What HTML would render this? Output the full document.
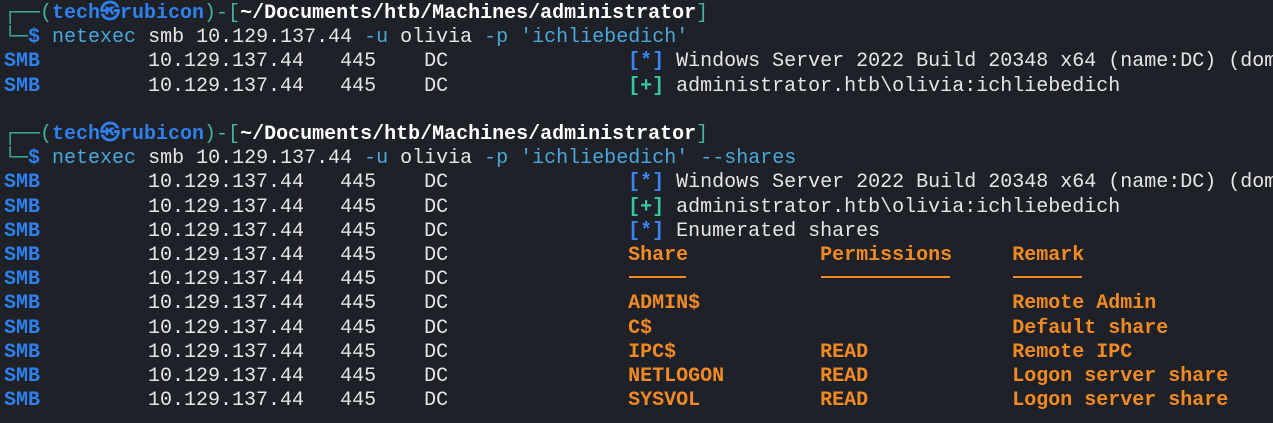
<!DOCTYPE html>
<html><head><meta charset="utf-8"><style>
body{margin:0;background:#1e2128;width:1273px;height:423px;overflow:hidden;position:relative}
pre{margin:0;padding:2px 0 0 4px;font-family:"Liberation Mono","DejaVu Sans Mono",monospace;font-size:20px;line-height:24.2px;color:#e6e6e6;width:1269px;overflow:hidden}
.t{color:#3fb5a0}.b{color:#2f80ec;font-weight:bold}.w{color:#fff;font-weight:bold}
.c{color:#4aa8dc}.o{color:#f28a24;font-weight:bold}.g{color:#35c7a4;font-weight:bold}.bl{color:#3a86f0;font-weight:bold}
.u{position:absolute;top:276px;height:2px;background:#f28a24}
</style></head><body><pre><span class="t">┌──(</span><span class="b">tech㉿rubicon</span><span class="t">)-[</span><span class="w">~/Documents/htb/Machines/administrator</span><span class="t">]</span>
<span class="t">└─</span><span class="b">$</span> <span class="c">netexec</span> smb 10.129.137.44 <span class="c">-u</span> olivia <span class="c">-p</span> <span class="c">'ichliebedich'</span>
<span class="b">SMB</span>         10.129.137.44   445    DC               <span class="bl">[*]</span> Windows Server 2022 Build 20348 x64 (name:DC) (domain:administrator.htb)
<span class="b">SMB</span>         10.129.137.44   445    DC               <span class="g">[+]</span> administrator.htb\olivia:ichliebedich

<span class="t">┌──(</span><span class="b">tech㉿rubicon</span><span class="t">)-[</span><span class="w">~/Documents/htb/Machines/administrator</span><span class="t">]</span>
<span class="t">└─</span><span class="b">$</span> <span class="c">netexec</span> smb 10.129.137.44 <span class="c">-u</span> olivia <span class="c">-p</span> <span class="c">'ichliebedich'</span> <span class="c">--shares</span>
<span class="b">SMB</span>         10.129.137.44   445    DC               <span class="bl">[*]</span> Windows Server 2022 Build 20348 x64 (name:DC) (domain:administrator.htb)
<span class="b">SMB</span>         10.129.137.44   445    DC               <span class="g">[+]</span> administrator.htb\olivia:ichliebedich
<span class="b">SMB</span>         10.129.137.44   445    DC               <span class="bl">[*]</span> Enumerated shares
<span class="b">SMB</span>         10.129.137.44   445    DC               <span class="o">Share           Permissions     Remark</span>
<span class="b">SMB</span>         10.129.137.44   445    DC
<span class="b">SMB</span>         10.129.137.44   445    DC               <span class="o">ADMIN$                          Remote Admin</span>
<span class="b">SMB</span>         10.129.137.44   445    DC               <span class="o">C$                              Default share</span>
<span class="b">SMB</span>         10.129.137.44   445    DC               <span class="o">IPC$            READ            Remote IPC</span>
<span class="b">SMB</span>         10.129.137.44   445    DC               <span class="o">NETLOGON        READ            Logon server share</span>
<span class="b">SMB</span>         10.129.137.44   445    DC               <span class="o">SYSVOL          READ            Logon server share</span></pre>
<div class="u" style="left:629px;width:57px"></div>
<div class="u" style="left:821px;width:129px"></div>
<div class="u" style="left:1013px;width:69px"></div>
</body></html>
